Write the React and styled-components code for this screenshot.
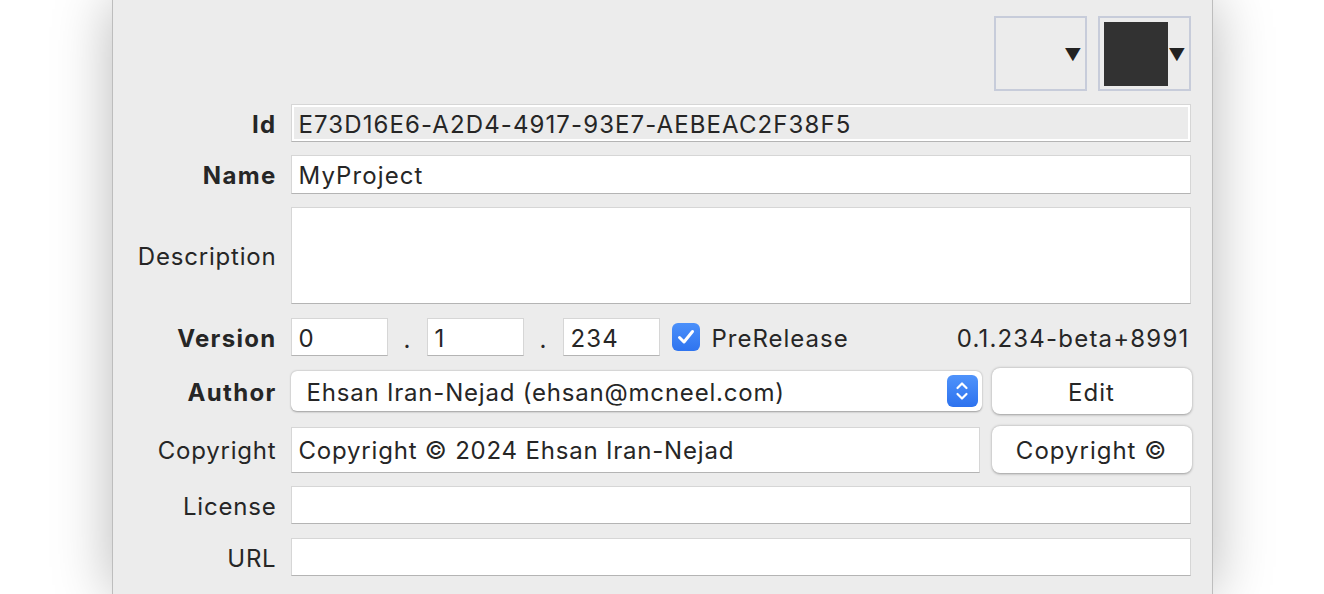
import React from "react";
import styled, { createGlobalStyle } from "styled-components";

const GlobalStyle = createGlobalStyle`
  html,body{margin:0;padding:0;background:#fff;}
  body{font-family:"Inter","Liberation Sans",sans-serif;color:#262626;overflow:hidden;}
`;

const Page = styled.div`
  width:1324px;height:594px;
  display:flex;justify-content:center;
  background:#fff;
`;

const Panel = styled.div`
  width:1101px;height:594px;
  box-sizing:border-box;
  background:#ececec;
  border-left:1px solid #bdbdbd;
  border-right:1px solid #bdbdbd;
  box-shadow:0 0 55px rgba(0,0,0,0.28);
  padding:16px 21px 0 0;
  display:flex;flex-direction:column;
`;

const TopBar = styled.div`
  height:75px;
  display:flex;justify-content:flex-end;gap:11px;
`;

const ColorButton = styled.div`
  width:93px;height:75px;box-sizing:border-box;
  border:2px solid #c7ccda;
  background:#ececec;
  display:flex;align-items:center;
  padding:0 3px 0 4px;
  .swatch{width:64px;height:64px;flex-shrink:0;background:${p=>p.$color||"transparent"};}
  .arrow{margin-left:auto;font-size:17px;color:#222;margin-top:3px;}
`;

const Row = styled.div`
  display:grid;
  grid-template-columns:163px 1fr;
  column-gap:15px;
  align-items:center;
  height:${p=>p.$h}px;
  margin-top:${p=>p.$mt ?? 13}px;
`;

const Label = styled.div`
  text-align:right;
  font-size:24px;
  font-weight:${p=>p.$bold?700:400};
  color:#262626;
  letter-spacing:${p=>p.$bold?1.3:0.8}px;
  margin-right:-1px;
  padding-top:2px;
`;

const Field = styled.div`
  height:${p=>p.$h||38}px;
  box-sizing:border-box;
  background:${p=>p.$readonly?"#ebebeb":"#fff"};
  border:1px solid #d6d6d6;
  border-bottom-color:#b4b4b4;
  ${p=>p.$readonly?"box-shadow:inset 0 0 0 2px #fff;":""}
  font-size:24px;
  padding:2px 7px 0;
  display:flex;align-items:center;
  white-space:nowrap;overflow:hidden;
  width:${p=>p.$w?p.$w+"px":"auto"};
  letter-spacing:${p=>p.$ls ?? 1.1}px;
`;

const WideField = styled(Field)`
  flex:1;
  margin-right:2px;
`;

const Inline = styled.div`
  display:flex;align-items:center;height:100%;
`;

const Dot = styled.span`
  width:39px;text-align:center;font-size:24px;padding-top:4px;
`;

const Check = styled.div`
  width:28px;height:28px;border-radius:6px;flex-shrink:0;
  background:linear-gradient(#4b90fa,#2f74ef);
  display:flex;align-items:center;justify-content:center;
  margin-left:12px;
`;

const CheckText = styled.span`
  font-size:24px;margin-left:12px;letter-spacing:1px;padding-top:2px;
`;

const VersionText = styled.span`
  margin-left:auto;margin-right:1px;font-size:24px;letter-spacing:1.2px;padding-top:2px;
`;

const SplitRow = styled.div`
  display:flex;align-items:center;gap:10px;height:100%;
`;

const Popup = styled.div`
  flex:1;height:40px;box-sizing:border-box;
  background:#fff;border-radius:6px;
  box-shadow:0 0.5px 2px rgba(0,0,0,0.35);
  display:flex;align-items:center;
  padding:0 4px 0 16px;
  font-size:24px;letter-spacing:0.8px;
  .txt{padding-top:2px;}
`;

const Stepper = styled.div`
  margin-left:auto;width:31px;height:32px;border-radius:6px;flex-shrink:0;
  background:linear-gradient(#4f93fb,#2d72ee);
  display:flex;align-items:center;justify-content:center;
`;

const Button = styled.div`
  width:200px;height:${p=>p.$h}px;box-sizing:border-box;flex-shrink:0;
  background:#fff;border-radius:8px;
  box-shadow:0 0.5px 2.5px rgba(0,0,0,0.35);
  display:flex;align-items:center;justify-content:center;
  font-size:24px;letter-spacing:1px;
  padding-top:2px;
  margin-right:-1px;
`;

export default function App(){
  return (
    <Page>
      <GlobalStyle/>
      <Panel>
        <TopBar>
          <ColorButton><span className="arrow">▼</span></ColorButton>
          <ColorButton $color="#323232"><div className="swatch"/><span className="arrow">▼</span></ColorButton>
        </TopBar>
        <Row $h={38}>
          <Label $bold>Id</Label>
          <Field $readonly>E73D16E6-A2D4-4917-93E7-AEBEAC2F38F5</Field>
        </Row>
        <Row $h={39}>
          <Label $bold>Name</Label>
          <Field $h={39}>MyProject</Field>
        </Row>
        <Row $h={97}>
          <Label>Description</Label>
          <Field $h={97}/>
        </Row>
        <Row $h={38} $mt={14}>
          <Label $bold>Version</Label>
          <Inline>
            <Field $w={97}>0</Field>
            <Dot>.</Dot>
            <Field $w={97}>1</Field>
            <Dot>.</Dot>
            <Field $w={97}>234</Field>
            <Check>
              <svg width="18" height="16" viewBox="0 0 18 16"><path d="M2.5 8.5 L7 13 L15.5 2.5" fill="none" stroke="#fff" strokeWidth="3" strokeLinecap="round" strokeLinejoin="round"/></svg>
            </Check>
            <CheckText>PreRelease</CheckText>
            <VersionText>0.1.234-beta+8991</VersionText>
          </Inline>
        </Row>
        <Row $h={46} $mt={12}>
          <Label $bold>Author</Label>
          <SplitRow>
            <Popup>
              <span className="txt">Ehsan Iran-Nejad (ehsan@mcneel.com)</span>
              <Stepper>
                <svg width="16" height="24" viewBox="0 0 16 24"><path d="M3.5 9 L8 4.5 L12.5 9 M3.5 15 L8 19.5 L12.5 15" fill="none" stroke="#fff" strokeWidth="2.2" strokeLinecap="round" strokeLinejoin="round"/></svg>
              </Stepper>
            </Popup>
            <Button $h={46}>Edit</Button>
          </SplitRow>
        </Row>
        <Row $h={47} $mt={12}>
          <Label>Copyright</Label>
          <SplitRow>
            <WideField $h={46} $ls={0.8}>Copyright © 2024 Ehsan Iran-Nejad</WideField>
            <Button $h={47}>Copyright ©</Button>
          </SplitRow>
        </Row>
        <Row $h={38}>
          <Label>License</Label>
          <Field/>
        </Row>
        <Row $h={38} $mt={14}>
          <Label>URL</Label>
          <Field/>
        </Row>
      </Panel>
    </Page>
  );
}
